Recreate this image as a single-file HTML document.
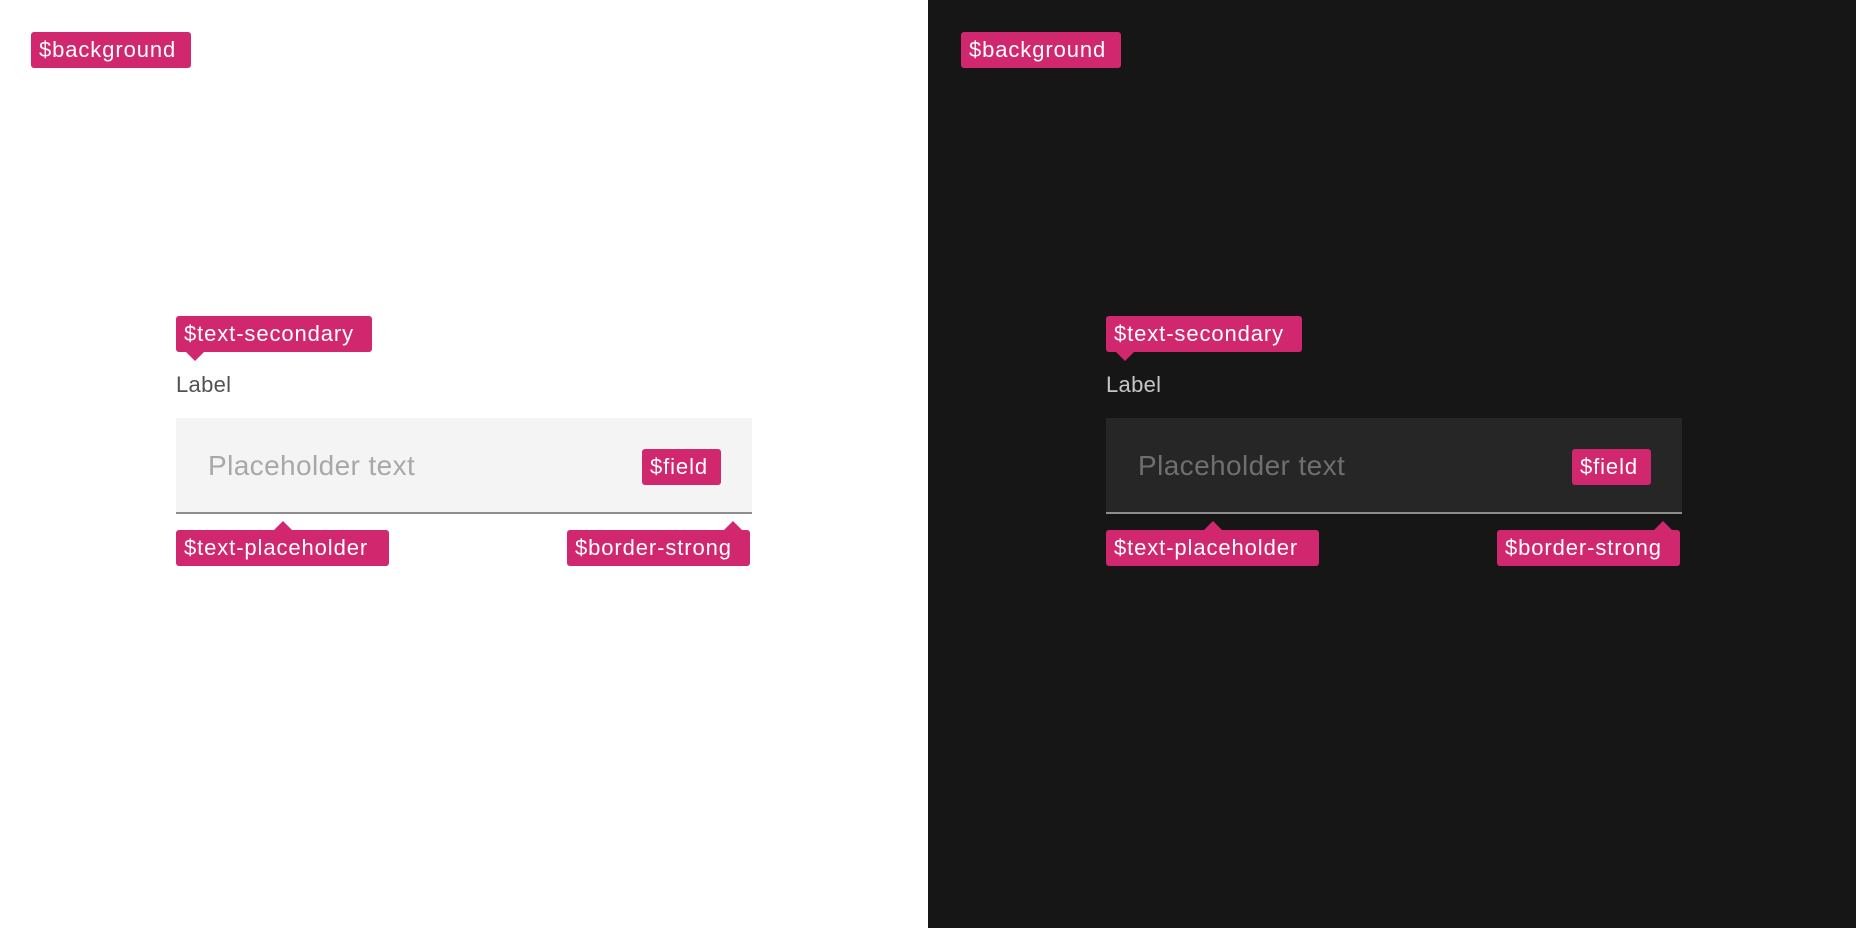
<!DOCTYPE html>
<html><head><style>
*{margin:0;padding:0;box-sizing:border-box}
body{width:1856px;height:928px;position:relative;overflow:hidden;font-family:"Liberation Sans",sans-serif;background:#fff}
.dark{position:absolute;left:928px;top:0;width:928px;height:928px;background:#161616}
.t{position:absolute;height:36px;background:#d0276f;color:#fff;border-radius:3px;font-size:22px;letter-spacing:0.9px;line-height:36px;padding:0 8px;white-space:nowrap}
.dn:after{content:"";position:absolute;width:0;height:0;border-left:9px solid transparent;border-right:9px solid transparent;top:36px;left:10px;border-top:9px solid #d0276f}
.a{position:absolute}
.tri{position:absolute;width:0;height:0;border-left:9px solid transparent;border-right:9px solid transparent;border-bottom:9px solid #d0276f}
.lbl{font-size:22px;letter-spacing:0.3px}
.fld{height:96px;width:576px;border-bottom:2px solid #8d8d8d}
.ph{font-size:28px;letter-spacing:0.4px;line-height:96px;padding-left:32px}
</style></head><body>
<div class="dark"></div>

<div class="t" style="left:31px;top:32px;width:160px">$background</div>
<div class="t" style="left:961px;top:32px;width:160px">$background</div>

<!-- light -->
<div class="t dn" style="left:176px;top:316px;width:196px">$text-secondary</div>
<div class="a lbl" style="left:176px;top:372px;color:#525252">Label</div>
<div class="a fld" style="left:176px;top:418px;background:#f4f4f4"><div class="ph" style="color:#a8a8a8">Placeholder text</div></div>
<div class="t" style="left:642px;top:449px;width:79px">$field</div>
<div class="t" style="left:176px;top:530px;width:213px">$text-placeholder</div>
<div class="t" style="left:567px;top:530px;width:183px">$border-strong</div>
<div class="tri" style="left:274px;top:521px"></div>
<div class="tri" style="left:724px;top:521px"></div>

<!-- dark -->
<div class="t dn" style="left:1106px;top:316px;width:196px">$text-secondary</div>
<div class="a lbl" style="left:1106px;top:372px;color:#c6c6c6">Label</div>
<div class="a fld" style="left:1106px;top:418px;background:#262626"><div class="ph" style="color:#6f6f6f">Placeholder text</div></div>
<div class="t" style="left:1572px;top:449px;width:79px">$field</div>
<div class="t" style="left:1106px;top:530px;width:213px">$text-placeholder</div>
<div class="t" style="left:1497px;top:530px;width:183px">$border-strong</div>
<div class="tri" style="left:1204px;top:521px"></div>
<div class="tri" style="left:1654px;top:521px"></div>
</body></html>
